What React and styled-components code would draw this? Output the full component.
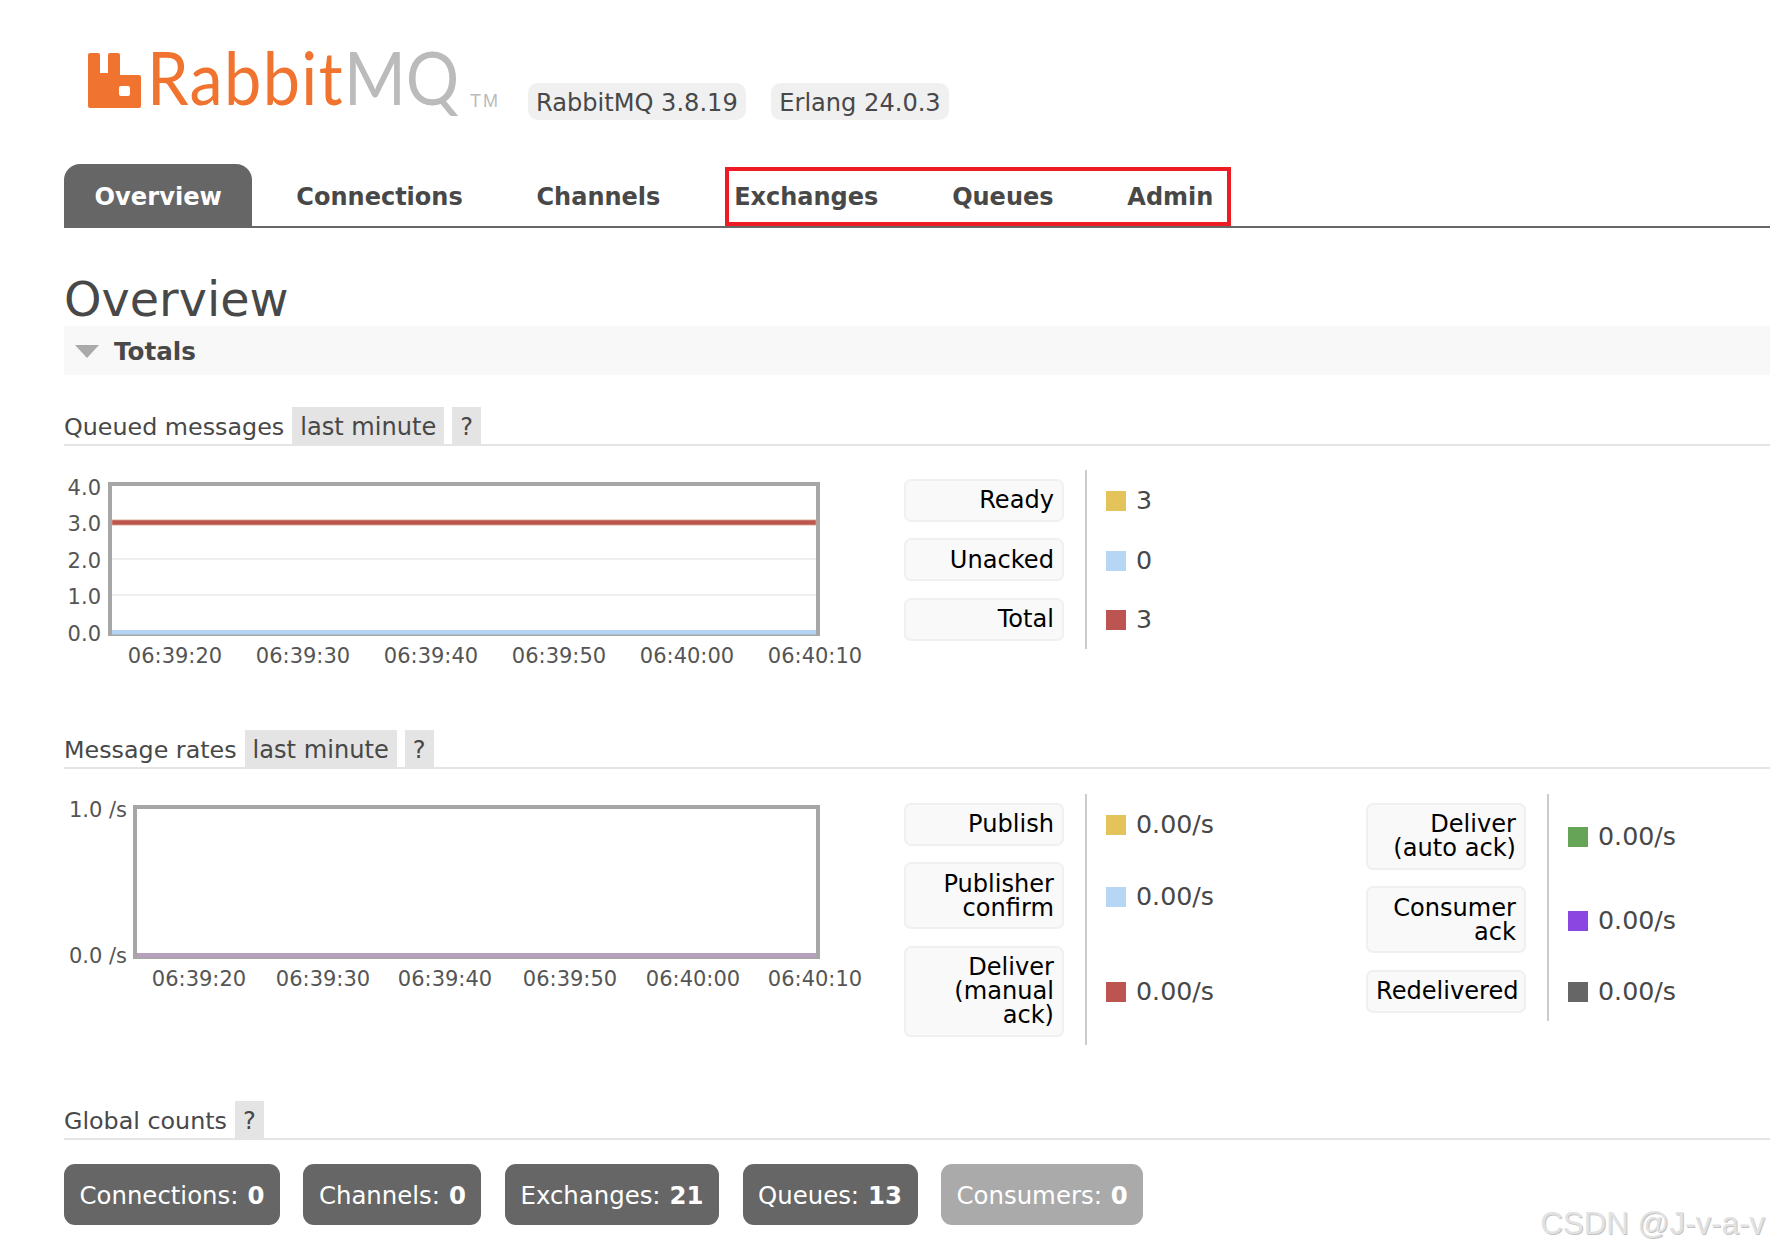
import styled, { createGlobalStyle } from 'styled-components';

const GlobalStyle = createGlobalStyle`
  html, body {
    margin: 0;
    background: #fff;
    overflow: hidden;
  }
  body {
    color: #484848;
    font-family: "DejaVu Sans", Verdana, sans-serif;
    font-size: 24.1px;
  }
`;

const Page = styled.div`
  position: relative;
  width: 1770px;
  height: 1254px;
  overflow: hidden;
  padding-left: 64px;
  box-sizing: border-box;
`;

const Header = styled.header`
  display: flex;
  align-items: flex-end;
  height: 120px;
  padding-left: 24px;
`;

const Logo = styled.div`
  display: flex;
  align-items: flex-end;
  flex: none;
  width: 440px;
  height: 68px;
  margin-bottom: 12px;
`;

const LogoSvg = styled.svg`
  flex: none;
  margin-right: 6px;
`;

const LogoText = styled.div`
  flex: none;
  display: flex;
  width: 315px;
  height: 68px;
  margin-bottom: -3px;
  white-space: nowrap;
  transform: scaleX(0.9);
  transform-origin: left bottom;
`;

const LogoWord = styled.span`
  color: ${(p) => p.$color};
  font-family: Lato, "Open Sans", sans-serif;
  font-size: 74px;
  line-height: 68px;
  letter-spacing: ${(p) => p.$spacing};
`;

const LogoTm = styled.span`
  color: #bbb;
  font-family: "Liberation Sans", sans-serif;
  font-size: 18px;
  line-height: 24px;
  letter-spacing: 2px;
  margin: 0 0 -5px 8px;
`;

const VersionBadge = styled.span`
  background: #f0f0f0;
  border-radius: 10px;
  height: 37px;
  line-height: 40px;
  padding: 0 8.5px 0 8px;
  margin-right: 25px;
`;

const Nav = styled.nav`
  position: relative;
  display: flex;
  height: 62px;
  margin-top: 44px;
  border-bottom: 2px solid #666;
  width: 1706px;
`;

const NavItem = styled.a`
  display: block;
  height: 64px;
  font-weight: 700;
  font-size: ${(p) => (p.$active ? '24.2px' : '24px')};
  line-height: 66px;
  padding: 0 ${(p) => (p.$active ? '30.5px' : '36.9px')};
  margin-right: ${(p) => (p.$active ? '7px' : '0')};
  color: ${(p) => (p.$active ? '#fff' : '#484848')};
  background: ${(p) => (p.$active ? '#666' : 'transparent')};
  border-radius: ${(p) => (p.$active ? '16px 16px 0 0' : '0')};
`;

const Highlight = styled.div`
  position: absolute;
  left: 661px;
  top: 3px;
  width: 506px;
  height: 59px;
  border: 4px solid #ed1c24;
  box-sizing: border-box;
`;

const Title = styled.h1`
  margin: 45px 0 0;
  font-size: 47.7px;
  font-weight: 400;
  line-height: 53px;
  color: #484848;
`;

const TotalsBar = styled.h2`
  display: flex;
  align-items: center;
  gap: 15px;
  box-sizing: border-box;
  height: 49px;
  margin: 0;
  padding: 2px 0 0 11px;
  background: #f8f8f8;
  font-size: 24.6px;
  font-weight: 700;
  width: 1706px;
`;

const Caret = styled.span`
  width: 0;
  height: 0;
  border-left: 12px solid transparent;
  border-right: 12px solid transparent;
  border-top: 13px solid #aaa;
`;

const Section = styled.section`
  margin-top: ${(p) => p.$top};
`;

const SectionHead = styled.div`
  display: flex;
  align-items: stretch;
  height: 37px;
  line-height: 41px;
  border-bottom: 2px solid #e4e4e4;
  width: 1706px;
  font-size: 23.8px;
`;

const HeadTab = styled.span`
  background: #e4e4e4;
  padding: 0 8px;
  margin-left: 8px;
  font-size: 24.1px;
`;

const Split = styled.div`
  display: flex;
  align-items: flex-start;
  margin-top: ${(p) => p.$top};
`;

const ChartSvg = styled.svg`
  display: block;
  flex: none;
  font-family: "DejaVu Sans", Verdana, sans-serif;
  font-size: 21px;
  fill: #555;
`;

const Legend = styled.table`
  flex: none;
  border-collapse: collapse;
  border-spacing: 0;
`;

const LabelCell = styled.th`
  padding: 8.5px 21px 8px 0;
  font-weight: 400;
  vertical-align: middle;
`;

const Label = styled.div`
  box-sizing: border-box;
  width: 160px;
  padding: 7.5px 8px;
  background: #f9f9f9;
  border: 2px solid #f0f0f0;
  border-radius: 7px;
  color: #000;
  text-align: right;
  line-height: 24px;
  white-space: pre-line;
`;

const ValueCell = styled.td`
  border-left: 2px solid #ccc;
  padding: 3px 0 0 19px;
  width: ${(p) => p.$width};
  color: #484848;
  font-size: 25.3px;
  line-height: 24px;
  vertical-align: middle;
`;

const Value = styled.span`
  display: flex;
  align-items: center;
  gap: 10px;
`;

const Swatch = styled.i`
  flex: none;
  width: 20px;
  height: 20px;
  background: ${(p) => p.$color};
`;

const Counts = styled.div`
  display: flex;
  gap: 23.5px;
  margin-top: 24px;
`;

const Count = styled.a`
  display: flex;
  align-items: center;
  gap: 9px;
  box-sizing: border-box;
  height: 61px;
  padding: 2px 15.5px 0;
  border-radius: 11px;
  background: ${(p) => (p.$muted ? '#aaa' : '#666')};
  color: #fff;
  font-size: 24.4px;
  b { font-weight: 700; }
`;

const Watermark = styled.div`
  position: absolute;
  right: 5px;
  bottom: 12px;
  color: #e2e2e2;
  font-family: "Liberation Sans", sans-serif;
  font-size: 31.3px;
  line-height: 36px;
  text-shadow: 1px 1px 0 #c4c4c4;
`;

function LogoMark() {
  return (
    <LogoSvg width="53" height="55" viewBox="0 0 53 55">
      <path
        fillRule="evenodd"
        fill="#f0732f"
        d="M2 0h8a2 2 0 0 1 2 2v18h8V2a2 2 0 0 1 2-2h8a2 2 0 0 1 2 2v20h19a2 2 0 0 1 2 2v29a2 2 0 0 1-2 2H2a2 2 0 0 1-2-2V2a2 2 0 0 1 2-2zM33 33a2 2 0 0 0-2 2v6a2 2 0 0 0 2 2h7a2 2 0 0 0 2-2v-6a2 2 0 0 0-2-2z"
      />
    </LogoSvg>
  );
}

const QUEUE_TIMES = [175, 303, 431, 559, 687, 815];
const RATE_TIMES = [199, 323, 445, 570, 693, 815];
const TIME_LABELS = ['06:39:20', '06:39:30', '06:39:40', '06:39:50', '06:40:00', '06:40:10'];

// svg x = page x - 64
function QueuedChart() {
  const ticks = [
    ['4.0', 17],
    ['3.0', 53],
    ['2.0', 90],
    ['1.0', 126.5],
    ['0.0', 163],
  ];
  return (
    <ChartSvg width="840" height="200" viewBox="0 0 840 200">
      <line x1="46" x2="755" y1="89" y2="89" stroke="#eee" strokeWidth="2" />
      <line x1="46" x2="755" y1="125" y2="125" stroke="#eee" strokeWidth="2" />
      <rect x="46" y="14" width="708" height="150" fill="none" stroke="#a6a6a6" strokeWidth="4" />
      <rect x="48" y="160" width="704" height="4.5" fill="#b5d4f2" />
      <rect x="48" y="50" width="704" height="5" fill="#bc5451" stroke="#d9a07f" strokeWidth="0.8" />
      {ticks.map(([t, y]) => (
        <text key={t} x="37" y={y + 7.5} textAnchor="end">{t}</text>
      ))}
      {QUEUE_TIMES.map((x, i) => (
        <text key={x} x={x - 64} y="192.5" textAnchor="middle">{TIME_LABELS[i]}</text>
      ))}
    </ChartSvg>
  );
}

function RatesChart() {
  return (
    <ChartSvg width="840" height="200" viewBox="0 0 840 200">
      <rect x="71" y="13" width="683" height="150" fill="none" stroke="#a6a6a6" strokeWidth="4" />
      <rect x="73" y="159" width="679" height="4.5" fill="#b5a0bd" />
      <text x="63" y="23" textAnchor="end">1.0 /s</text>
      <text x="63" y="168.5" textAnchor="end">0.0 /s</text>
      {RATE_TIMES.map((x, i) => (
        <text key={x} x={x - 64} y="191.5" textAnchor="middle">{TIME_LABELS[i]}</text>
      ))}
    </ChartSvg>
  );
}

function LegendTable({ rows, width }) {
  return (
    <Legend>
      <tbody>
        {rows.map((row) => (
          <tr key={row.label}>
            <LabelCell><Label>{row.label}</Label></LabelCell>
            <ValueCell $width={width}>
              <Value><Swatch $color={row.color} />{row.value}</Value>
            </ValueCell>
          </tr>
        ))}
      </tbody>
    </Legend>
  );
}

const queued = [
  { label: 'Ready', color: '#e4c35b', value: '3' },
  { label: 'Unacked', color: '#b7d6f3', value: '0' },
  { label: 'Total', color: '#bc5451', value: '3' },
];
const ratesLeft = [
  { label: 'Publish', color: '#e4c35b', value: '0.00/s' },
  { label: 'Publisher\nconfirm', color: '#b7d6f3', value: '0.00/s' },
  { label: 'Deliver\n(manual\nack)', color: '#bc5451', value: '0.00/s' },
];
const ratesRight = [
  { label: 'Deliver\n(auto ack)', color: '#66a558', value: '0.00/s' },
  { label: 'Consumer\nack', color: '#8b45e0', value: '0.00/s' },
  { label: 'Redelivered', color: '#666', value: '0.00/s' },
];

export default function App() {
  return (
    <>
      <GlobalStyle />
      <Page>
        <Header>
          <Logo>
            <LogoMark />
            <LogoText>
              <LogoWord $color="#f0732f" $spacing="1.5px">Rabbit</LogoWord>
              <LogoWord $color="#bbb" $spacing="0">MQ</LogoWord>
            </LogoText>
            <LogoTm>TM</LogoTm>
          </Logo>
          <VersionBadge>RabbitMQ 3.8.19</VersionBadge>
          <VersionBadge>Erlang 24.0.3</VersionBadge>
        </Header>

        <Nav>
          <NavItem $active>Overview</NavItem>
          <NavItem>Connections</NavItem>
          <NavItem>Channels</NavItem>
          <NavItem>Exchanges</NavItem>
          <NavItem>Queues</NavItem>
          <NavItem>Admin</NavItem>
          <Highlight />
        </Nav>

        <Title>Overview</Title>
        <TotalsBar><Caret />Totals</TotalsBar>

        <Section $top="32px">
          <SectionHead>
            Queued messages
            <HeadTab>last minute</HeadTab>
            <HeadTab>?</HeadTab>
          </SectionHead>
          <Split $top="24px">
            <QueuedChart />
            <LegendTable rows={queued} width="600px" />
          </Split>
        </Section>

        <Section $top="60px">
          <SectionHead>
            Message rates
            <HeadTab>last minute</HeadTab>
            <HeadTab>?</HeadTab>
          </SectionHead>
          <Split $top="25px">
            <RatesChart />
            <LegendTable rows={ratesLeft} width="260px" />
            <LegendTable rows={ratesRight} width="120px" />
          </Split>
        </Section>

        <Section $top="56.5px">
          <SectionHead>
            Global counts
            <HeadTab>?</HeadTab>
          </SectionHead>
          <Counts>
            <Count>Connections: <b>0</b></Count>
            <Count>Channels: <b>0</b></Count>
            <Count>Exchanges: <b>21</b></Count>
            <Count>Queues: <b>13</b></Count>
            <Count $muted>Consumers: <b>0</b></Count>
          </Counts>
        </Section>

        <Watermark>CSDN @J-v-a-v</Watermark>
      </Page>
    </>
  );
}
